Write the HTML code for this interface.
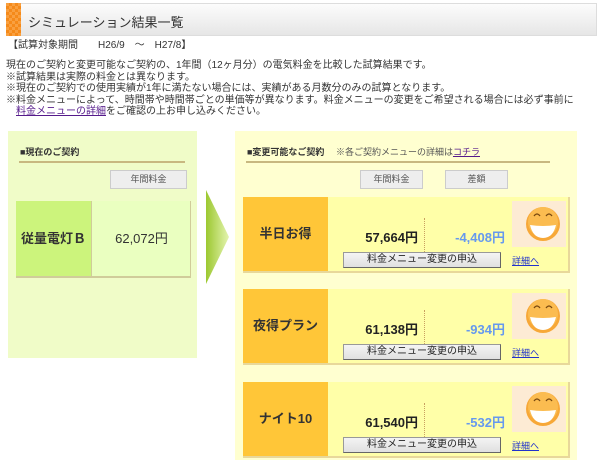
<!DOCTYPE html>
<html><head><meta charset="utf-8"><style>
*{margin:0;padding:0;box-sizing:border-box}
body{width:600px;height:460px;background:#fff;position:relative;overflow:hidden;font-family:"Liberation Sans","Noto Sans CJK JP",sans-serif;color:#333}
.a{position:absolute}
.hdr{left:6px;top:3px;width:591px;height:33px;background:linear-gradient(#fcfcfc,#e6e6e6);border:1px solid #ddd}
.org{left:6px;top:3px;width:15px;height:33px;background:repeating-conic-gradient(#f58a1a 0 25%,#f9a040 0 50%) 0 0/6px 6px}
.t{font-size:10px;line-height:11.6px;white-space:nowrap}
.btn{background:#eee;border:1px solid #ccc;font-size:9px;text-align:center;line-height:16px;color:#555}
.card{left:243px;width:327px;height:76px;background:#ffffa8;border-right:2px solid #e8d89a;border-bottom:2px solid #e8d89a}
.card .nm{position:absolute;left:0;top:0;width:85px;height:74px;background:#ffc638;font-weight:bold;font-size:13px;text-align:center;line-height:74px;color:#333}
.card .amt{position:absolute;right:150px;top:30px;font-weight:bold;font-size:13px;color:#222}
.card .dif{position:absolute;right:63px;top:30px;font-weight:bold;font-size:13px;color:#6699ee}
.card .dot{position:absolute;left:181px;top:21px;height:36px;border-left:1px dotted #c8a060}
.card .ap{position:absolute;left:100px;top:55px;width:158px;height:16px;background:linear-gradient(#f4f4f4,#e0e0e0);border:1px solid #999;border-right-color:#666;border-bottom-color:#666;font-size:10px;text-align:center;line-height:14px;color:#222}
.card .lk{position:absolute;left:269px;top:57px;font-size:9px;color:#2233cc;text-decoration:underline}
.card svg{position:absolute;left:269px;top:4px}
</style></head><body>
<div class="a hdr"></div><div class="a org"></div>
<div class="a" style="left:28px;top:12px;font-size:13px;color:#333">シミュレーション結果一覧</div>
<div class="a t" style="left:8px;top:40px">【試算対象期間　　H26/9　～　H27/8】</div>
<div class="a t" style="left:6px;top:60px">現在のご契約と変更可能なご契約の、1年間（12ヶ月分）の電気料金を比較した試算結果です。<br>※試算結果は実際の料金とは異なります。<br>※現在のご契約での使用実績が1年に満たない場合には、実績がある月数分のみの試算となります。<br>※料金メニューによって、時間帯や時間帯ごとの単価等が異なります。料金メニューの変更をご希望される場合には必ず事前に<br>　<span style="color:#551a8b;text-decoration:underline">料金メニューの詳細</span>をご確認の上お申し込みください。</div>

<div class="a" style="left:8px;top:131px;width:189px;height:227px;background:#f0fcc8"></div>
<div class="a" style="left:20px;top:145px;font-size:9px;font-weight:bold;color:#333">■現在のご契約</div>
<div class="a" style="left:19px;top:161px;width:166px;height:2px;background:#c8b880"></div>
<div class="a btn" style="left:110px;top:170px;width:77px;height:19px">年間料金</div>
<div class="a" style="left:16px;top:201px;width:175px;height:77px;border-right:1px solid #d0cc9a;border-bottom:2px solid #d0cc9a;background:#eaffc0"></div>
<div class="a" style="left:16px;top:201px;width:76px;height:75px;background:#ccf47c;border-right:1px solid #d0cc9a;font-weight:bold;font-size:13px;line-height:75px;text-align:center">従量電灯Ｂ</div>
<div class="a" style="left:93px;top:201px;width:97px;height:75px;font-size:13px;line-height:75px;text-align:center">62,072円</div>
<svg class="a" style="left:206px;top:190px" width="24" height="94"><defs><linearGradient id="g" x1="0" x2="1"><stop offset="0" stop-color="#9cc830"/><stop offset="1" stop-color="#e4f4b0"/></linearGradient></defs><path d="M0 0L23 47L0 94Z" fill="url(#g)"/></svg>

<div class="a" style="left:235px;top:131px;width:342px;height:329px;background:#ffffd0"></div>
<div class="a" style="left:247px;top:145px;font-size:9px;white-space:nowrap"><b>■変更可能なご契約</b>　 <span style="color:#555">※各ご契約メニューの詳細は<span style="color:#551a8b;text-decoration:underline">コチラ</span></span></div>
<div class="a" style="left:246px;top:161px;width:304px;height:2px;background:#c8b880"></div>
<div class="a btn" style="left:360px;top:170px;width:63px;height:19px">年間料金</div>
<div class="a btn" style="left:445px;top:170px;width:63px;height:19px">差額</div>

<div class="a card" style="top:197px"><div class="nm">半日お得</div><div class="amt">57,664円</div><div class="dot"></div><div class="dif">-4,408円</div><div class="ap">料金メニュー変更の申込</div><div class="lk">詳細へ</div>
<svg width="54" height="46"><rect width="54" height="46" fill="#fdebd4"/><circle cx="31" cy="23" r="17" fill="#f7a838"/><circle cx="31" cy="21" r="15" fill="#fbbc50"/><path d="M18 24Q31 26 44 24Q41 37 31 37Q21 37 18 24Z" fill="#fff"/><path d="M22 15q3-4 6 0M34 15q3-4 6 0" stroke="#7a4a10" stroke-width="1.3" fill="none"/></svg></div>
<div class="a card" style="top:289px"><div class="nm">夜得プラン</div><div class="amt">61,138円</div><div class="dot"></div><div class="dif">-934円</div><div class="ap">料金メニュー変更の申込</div><div class="lk">詳細へ</div>
<svg width="54" height="46"><rect width="54" height="46" fill="#fdebd4"/><circle cx="31" cy="23" r="17" fill="#f7a838"/><circle cx="31" cy="21" r="15" fill="#fbbc50"/><path d="M18 24Q31 26 44 24Q41 37 31 37Q21 37 18 24Z" fill="#fff"/><path d="M22 15q3-4 6 0M34 15q3-4 6 0" stroke="#7a4a10" stroke-width="1.3" fill="none"/></svg></div>
<div class="a card" style="top:382px"><div class="nm">ナイト10</div><div class="amt">61,540円</div><div class="dot"></div><div class="dif">-532円</div><div class="ap">料金メニュー変更の申込</div><div class="lk">詳細へ</div>
<svg width="54" height="46"><rect width="54" height="46" fill="#fdebd4"/><circle cx="31" cy="23" r="17" fill="#f7a838"/><circle cx="31" cy="21" r="15" fill="#fbbc50"/><path d="M18 24Q31 26 44 24Q41 37 31 37Q21 37 18 24Z" fill="#fff"/><path d="M22 15q3-4 6 0M34 15q3-4 6 0" stroke="#7a4a10" stroke-width="1.3" fill="none"/></svg></div>
</body></html>
